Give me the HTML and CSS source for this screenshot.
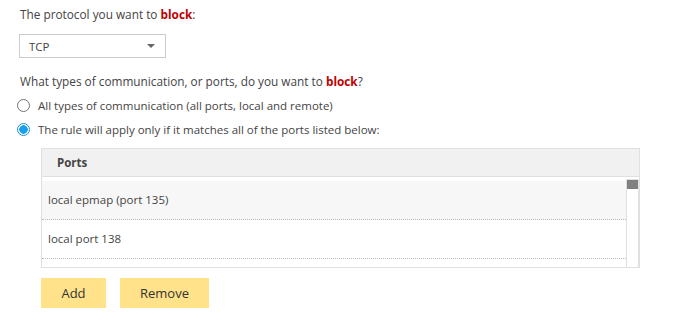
FILE: index.html
```html
<!DOCTYPE html>
<html lang="en">
<head>
    <meta charset="UTF-8">
    <title>Block rule</title>
    <link rel="stylesheet" href="styles.css">
</head>
<body>

<div class="page">
    <p class="question">The protocol you want to <b class="action">block</b>:</p>

    <div class="select">
        <span>TCP</span>
        <span class="arrow"></span>
    </div>

    <p class="question">What types of communication, or ports, do you want to <b class="action">block</b>?</p>

    <label class="radio">
        <span class="dot"></span>
        All types of communication (all ports, local and remote)
    </label>
    <label class="radio">
        <span class="dot checked"></span>
        The rule will apply only if it matches all of the ports listed below:
    </label>

    <div class="ports">
        <div class="ports-head">Ports</div>
        <div class="ports-body">
            <div class="rows">
                <div class="row selected">local epmap (port 135)</div>
                <div class="row">local port 138</div>
            </div>
            <div class="scrollbar"><div class="thumb"></div></div>
        </div>
    </div>

    <div class="buttons">
        <button class="btn add">Add</button>
        <button class="btn remove">Remove</button>
    </div>
</div>

</body>
</html>
```

FILE: styles.css
```css
body{
    margin: 0;
    background-color: #ffffff;
    font-family: "Open Sans", "Noto Sans", sans-serif;
    font-size: 11.5px;
    color: #444444;
}
.page{
    padding: 5px 0 0 20px;
}
.question{
    margin: 0;
    line-height: 18px;
    font-size: 11.8px;
}
.action{
    color: #c00000;
    font-weight: bold;
}
.select{
    display: flex;
    justify-content: space-between;
    align-items: center;
    width: 145px;
    height: 22px;
    margin: 11px 0 14px -1px;
    border: 1px solid #cccccc;
}
.select span:first-child{
    padding-left: 9px;
}
.arrow{
    width: 0;
    height: 0;
    margin-right: 10px;
    border-left: 4px solid transparent;
    border-right: 4px solid transparent;
    border-top: 4px solid #666666;
}
.radio{
    display: flex;
    align-items: center;
    gap: 8px;
    height: 24px;
    margin-left: -3px;
}
.radio:first-of-type{
    margin-top: 3px;
}
.dot{
    width: 11px;
    height: 11px;
    border: 1px solid #777777;
    border-radius: 50%;
    background: #ffffff;
}
.dot.checked{
    border-color: #1e90d6;
    background: radial-gradient(circle, #18a0ee 0 4px, #ffffff 4.5px);
}
.ports{
    width: 597px;
    margin: 7px 0 0 21px;
    border: 1px solid #e0e0e0;
}
.ports-head{
    height: 27px;
    line-height: 27px;
    padding-left: 15px;
    background-color: #f1f1f1;
    border-bottom: 1px solid #e0e0e0;
    font-weight: bold;
}
.ports-body{
    display: flex;
    padding-top: 2px;
    height: 88px;
}
.rows{
    flex: 1;
    padding-top: 2px;
}
.row{
    height: 38px;
    line-height: 38px;
    padding-left: 6px;
    border-bottom: 1px dotted #bbbbbb;
}
.row.selected{
    background-color: #f7f7f7;
}
.scrollbar{
    width: 11px;
    border: 1px solid #e0e0e0;
    border-bottom: none;
    background: #ffffff;
}
.thumb{
    height: 9px;
    background-color: #808080;
}
.buttons{
    display: flex;
    gap: 14px;
    margin: 10px 0 0 21px;
}
.btn{
    height: 30px;
    border: none;
    background-color: #ffe28a;
    color: #333333;
    font-family: "Open Sans", "Noto Sans", sans-serif;
    font-size: 13px;
    cursor: pointer;
}
.add{
    width: 65px;
}
.remove{
    width: 89px;
}
```
